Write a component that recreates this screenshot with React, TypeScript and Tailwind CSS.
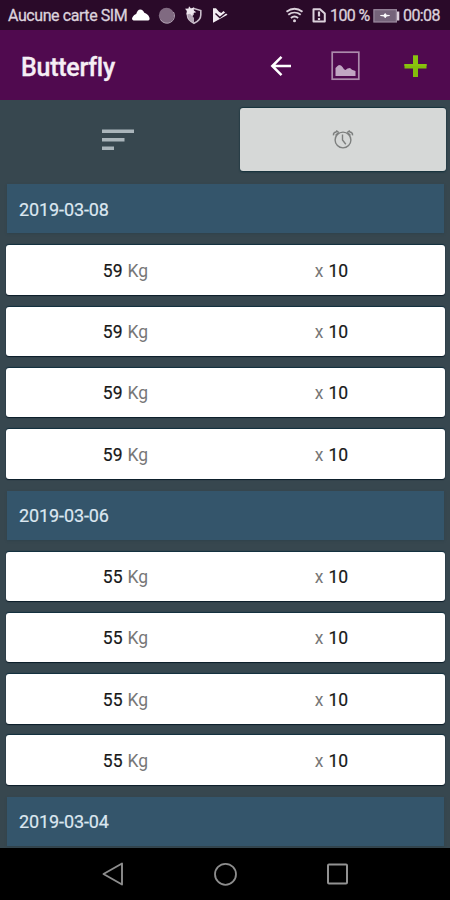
interface Entry {
  weight: number;
  reps: number;
}

interface Session {
  date: string;
  entries: Entry[];
}

const sessions: Session[] = [
  { date: "2019-03-08", entries: Array.from({ length: 4 }, () => ({ weight: 59, reps: 10 })) },
  { date: "2019-03-06", entries: Array.from({ length: 4 }, () => ({ weight: 55, reps: 10 })) },
  { date: "2019-03-04", entries: [] },
];

function StatusBar() {
  return (
    <div className="flex h-[30px] shrink-0 items-center justify-between bg-[#2a0a29] pl-2 pr-[10px] text-[16px] leading-none text-[#dcd2dc] [-webkit-text-stroke:0.3px_#dcd2dc]">
      <div className="flex items-center">
        <span className="w-[120px] whitespace-nowrap pt-[2px] tracking-[-0.42px]">Aucune carte SIM</span>
        {/* Cloud, record, shield, play */}
        <svg width="104" height="30" viewBox="128 0 104 30" fill="none">
          <path d="M133.500 20.500a2 2 0 0 1-1-3.200c.8-1.600 2-2.800 3.700-3.300C137 11.300 138.300 9.500 140.300 9.500c2 0 3.200 1.300 4 3.300 2.500.8 4 2.200 4.900 4.200.9 1.700.3 3.500-1.200 3.500z" fill="#fff" />
          <circle cx="166.500" cy="15.500" r="7.700" fill="#806a81" />
          <path d="M160.500 19.500a7.300 7.300 0 0 0 13-7.500" stroke="#b3a3b4" strokeWidth="1" />
          <path d="M187.500 11l6.500-2.500 6.800 2v4.500c0 4-2.800 6.500-6.800 8.300-3.500-1.800-6.500-4-6.500-8z" stroke="#c9bdca" strokeWidth="1.600" />
          <path d="M188 11.500l6-2v5l-1.500 1.500 1.500 2v4.500c-3.500-1.500-6-4-6-7.500z" fill="#b5a7b6" />
          <path d="M189 6.300l2 2.200 3.200-1.300-.7 3 2.800 2-3.300.8-.7 3.200-2.300-2.500-3.800.8 1-3.200-2.200-2.500 3.500-.3z" fill="#eee6ee" />
          <path d="M213 8.300h3l3 3.500 2.300 1.200 2.200-2 4 3.800L213 22.800z" fill="#f1ebf1" />
          <path d="M215.500 13.500l4.300 4 7-5.500" stroke="#2a0a29" strokeWidth="1.400" />
        </svg>
      </div>
      <div className="flex items-center">
        {/* Wifi and missing SIM */}
        <svg width="47" height="30" viewBox="284 0 47 30" fill="none" stroke="#dcd2dc">
          <path d="M287.500 11.700c5-3.700 11-3.700 16 0M289.300 14.800c3.700-2.900 8.700-2.900 12.400 0M291.900 17.900c2.200-1.700 5-1.700 7.200 0" strokeWidth="1.900" />
          <circle cx="295.500" cy="20.700" r="1.500" fill="#dcd2dc" stroke="none" />
          <path d="M314.500 9.200h6.500l4.800 4.300v8h-11.300z" strokeWidth="2" strokeLinejoin="round" />
          <path d="M320 11.500v5M320 18v2" strokeWidth="2.200" />
        </svg>
        <span className="w-[42px] whitespace-nowrap pt-[2px] tracking-[-0.6px]">100 %</span>
        {/* Battery */}
        <svg width="31" height="30" viewBox="372 0 31 30">
          <rect x="373.900" y="9.700" width="22.500" height="12.300" fill="#75647a" stroke="#9b8b9f" strokeWidth="1.200" />
          <path d="M397 11.500h2.300v9H397z" fill="#dcd2dc" />
          <path d="M380.500 15.500l3.500-.2 1.200-1.800 1.300 1.800 3 .2-3 .5-1.300 1.800-1.200-1.800z" fill="#fff" stroke="#fff" strokeWidth=".9" />
        </svg>
        <span className="w-[37px] whitespace-nowrap pt-[2px] tracking-[-0.6px]">00:08</span>
      </div>
    </div>
  );
}

function AppBar() {
  return (
    <header className="flex h-[70px] shrink-0 items-center justify-between bg-[#500a4f] pl-[21px] pr-[23px]">
      <h1 className="pt-[4px] text-[25px] font-medium leading-none tracking-[-0.25px] text-[#f5eef5] [-webkit-text-stroke:0.3px_#f5eef5]">Butterfly</h1>
      <div className="flex items-center">
        <svg width="22" height="22" viewBox="0 0 22 22" fill="none" stroke="#fff" strokeWidth="2.500" className="mr-[39px] mt-px">
          <path d="M21 11H3M11.500 1.800L2.300 11l9.200 9.200" />
        </svg>
        <svg width="29" height="30" viewBox="0 0 29 30" className="mr-[44px] mt-px">
          <rect x="1.200" y="1.200" width="26.600" height="27" fill="none" stroke="#ac8bac" strokeWidth="1.700" />
          <path d="M4.500 25V17l2-2 1.500-1 2 .5 1.500 1.500 1.500 2.200 1.500.8 2-1.500 2.500-.5 2 1.800 3.500 1.200V25z" fill="#c1a6c3" />
        </svg>
        <svg width="23" height="23" viewBox="0 0 23 23" className="mt-[2px]">
          <path d="M9 .5h5V9h8.500v4.500H14v8.500H9v-8.500H.5V9H9z" fill="#83bd0b" />
          <path d="M9 .5h5V9h8.500v2H.5V9H9z" fill="#8ac20e" />
        </svg>
      </div>
    </header>
  );
}

function Tabs() {
  return (
    <div className="flex h-[78.250px] shrink-0 pr-[4px] pt-[8px]">
      <button className="flex h-[63px] w-[240px] items-center justify-center pr-[4px]">
        <svg width="32" height="22" viewBox="0 0 32 22" fill="#aab5bb">
          <path d="M0 .5h32v3.500H0zM0 9h22.500v3.500H0zM0 17.500h12V21H0z" />
        </svg>
      </button>
      <button className="flex h-[63px] flex-1 items-center justify-center rounded-[3px] bg-[#d6d8d7] shadow-[0_1px_2px_#102f3a,0_-1px_1px_#19343d]">
        <svg width="22" height="20" viewBox="0 0 22 20" fill="none" stroke="#7d7f7e" strokeWidth="1.400" className="mb-px">
          <circle cx="11" cy="11" r="7.900" />
          <path d="M10.500 5.500V11l3.300 4.300M1.500 6.300c-.3-1.800 1-3 2.500-3.300l.8-1 2 1.500M20.500 6.300c.3-1.800-1-3-2.500-3.300l-.8-1-2 1.500M3.500 6.500l3-3M18.500 6.500l-3-3" />
        </svg>
      </button>
    </div>
  );
}

function DateRow({ date }: { date: string }) {
  return (
    <div className="flex h-[61.250px] shrink-0 items-center pl-[7px] pr-[6px]">
      <div className="flex h-[49px] flex-1 items-center bg-[#34556b] pl-[12px] pt-[2px] text-[18px] leading-none tracking-[-0.1px] text-[#dce7f0] shadow-[0_1px_2px_#30434c] [-webkit-text-stroke:0.2px_#dce7f0]">
        {date}
      </div>
    </div>
  );
}

function EntryRow({ weight, reps }: Entry) {
  return (
    <div className="flex h-[61.250px] shrink-0 items-center pl-[6px] pr-[5px]">
      <div className="flex h-[49.500px] flex-1 items-center rounded-[3px] bg-white pt-[3px] text-[17.500px] leading-none text-[#777] shadow-[0_1px_1px_#0b1c28,0_-1px_1px_#112f3e] [word-spacing:0.7px]">
        <div className="w-[239px] text-center">
          <span className="text-[#181818] [-webkit-text-stroke:0.2px_#181818]">{weight}</span> Kg
        </div>
        <div className="w-[173px] text-center">
          x <span className="text-[#181818] [-webkit-text-stroke:0.2px_#181818]">{reps}</span>
        </div>
      </div>
    </div>
  );
}

function NavBar() {
  return (
    <nav className="flex h-[52px] shrink-0 items-center justify-center gap-[88px] bg-black">
      <svg width="24" height="26" viewBox="0 0 24 26" fill="none" stroke="#8d8d8d" strokeWidth="1.900">
        <path d="M21 2.500v21L2.500 13z" strokeLinejoin="round" />
      </svg>
      <svg width="24" height="24" viewBox="0 0 24 24" fill="none" stroke="#8d8d8d" strokeWidth="1.800">
        <circle cx="12.500" cy="12.300" r="10.500" />
      </svg>
      <svg width="24" height="24" viewBox="0 0 24 24" fill="none" stroke="#929292" strokeWidth="2">
        <rect x="3" y="2.500" width="19" height="19" rx="1" />
      </svg>
    </nav>
  );
}

export default function App() {
  return (
    <div className="flex h-[900px] w-[450px] flex-col overflow-hidden bg-[#37474f] font-[Roboto,sans-serif]">
      <StatusBar />
      <AppBar />
      <Tabs />
      <main className="flex min-h-0 flex-1 flex-col overflow-hidden">
        {sessions.map((session) => (
          <section key={session.date} className="shrink-0">
            <DateRow date={session.date} />
            {session.entries.map((entry, i) => (
              <EntryRow key={i} {...entry} />
            ))}
          </section>
        ))}
      </main>
      <NavBar />
    </div>
  );
}
